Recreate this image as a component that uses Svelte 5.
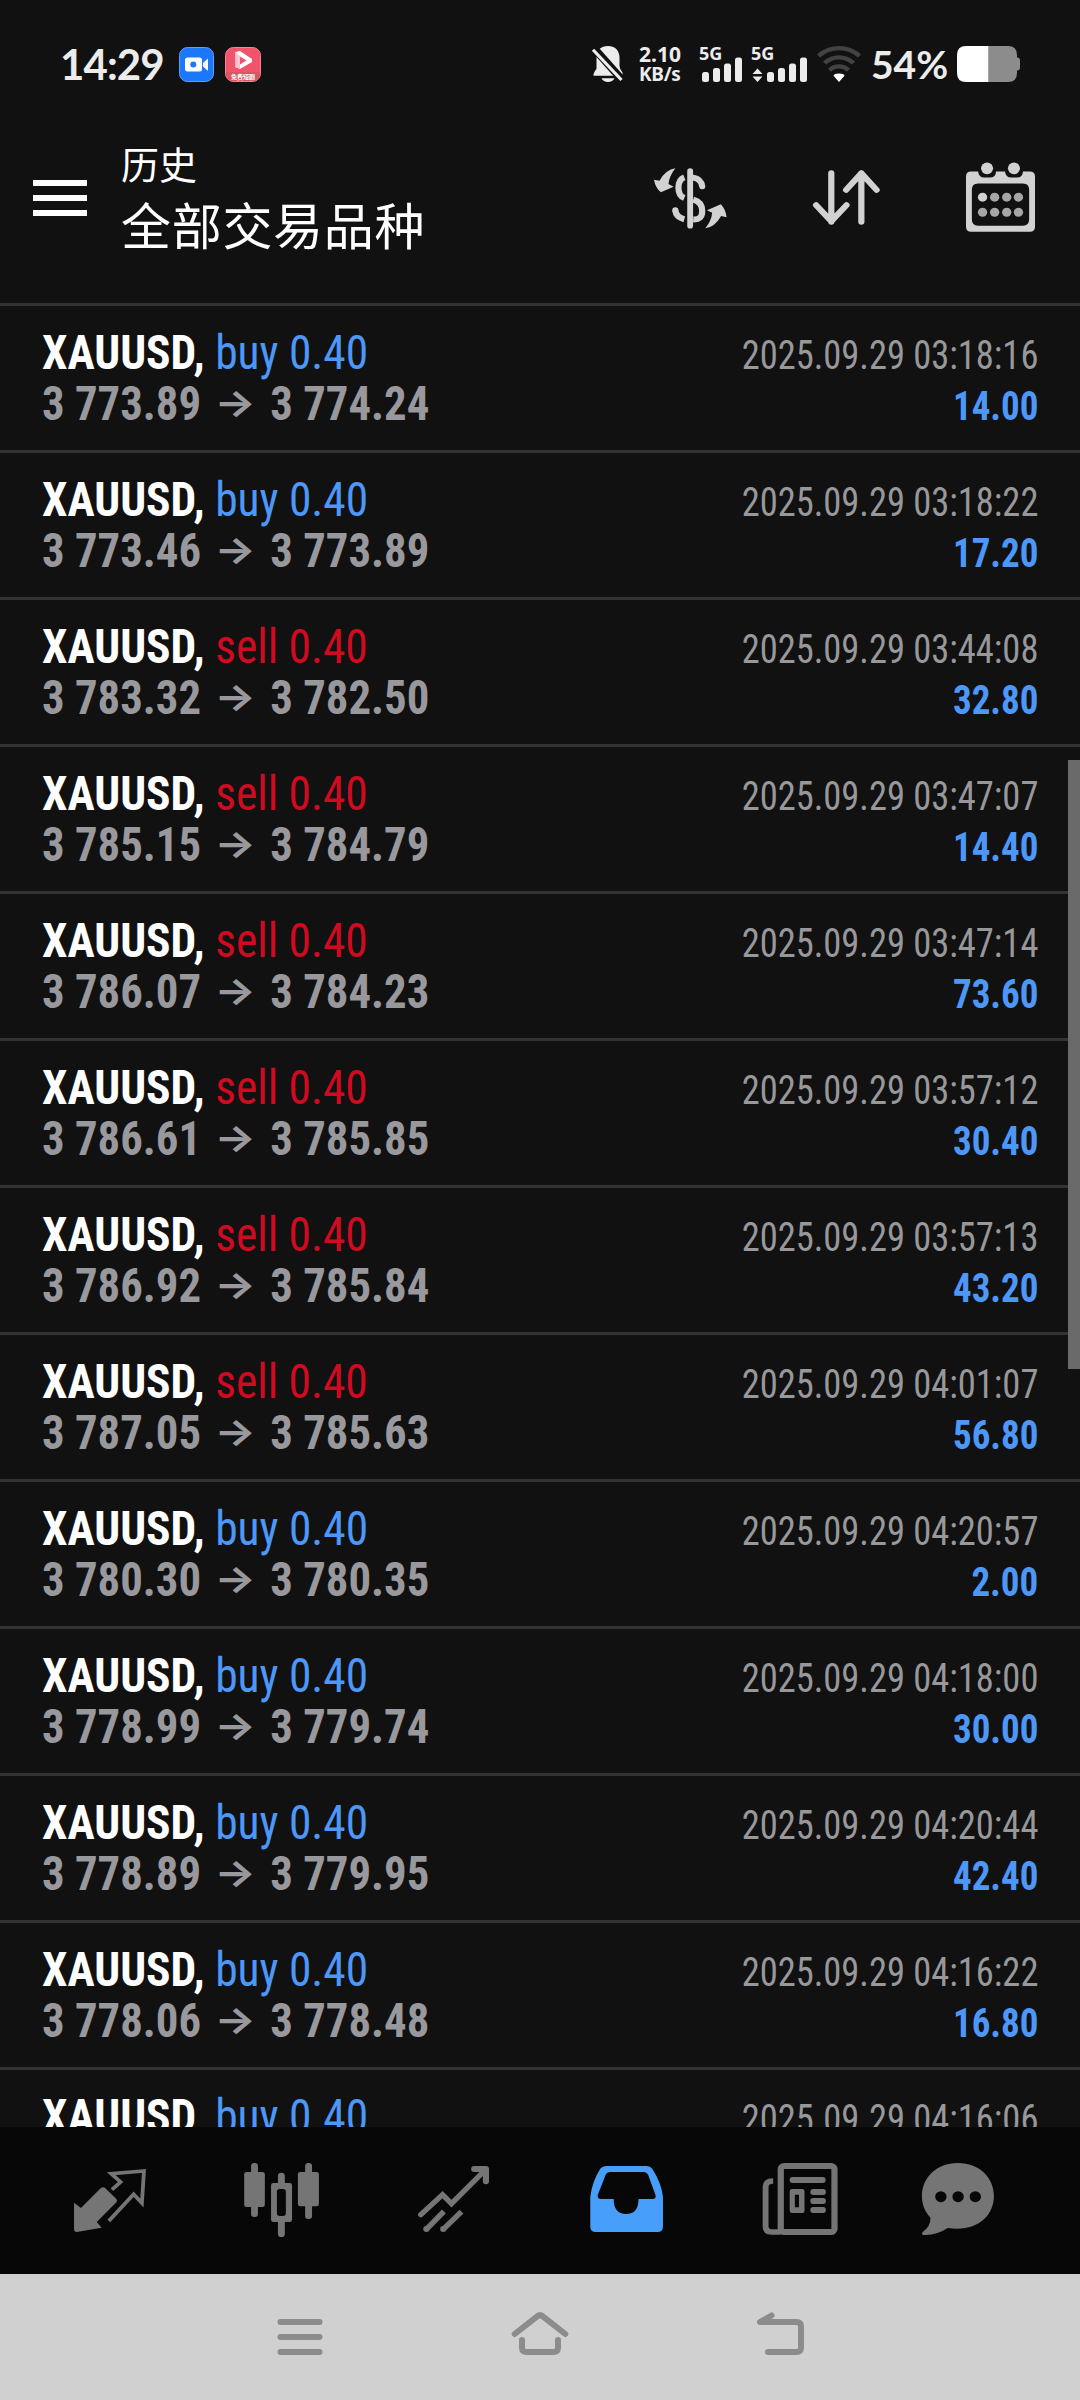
<script lang="ts">
  type Deal = {
    side: "buy" | "sell";
    open: string;
    close: string;
    time: string;
    profit: string;
  };

  const deals: Deal[] = [
    { side: "buy", open: "3 773.89", close: "3 774.24", time: "03:18:16", profit: "14.00" },
    { side: "buy", open: "3 773.46", close: "3 773.89", time: "03:18:22", profit: "17.20" },
    { side: "sell", open: "3 783.32", close: "3 782.50", time: "03:44:08", profit: "32.80" },
    { side: "sell", open: "3 785.15", close: "3 784.79", time: "03:47:07", profit: "14.40" },
    { side: "sell", open: "3 786.07", close: "3 784.23", time: "03:47:14", profit: "73.60" },
    { side: "sell", open: "3 786.61", close: "3 785.85", time: "03:57:12", profit: "30.40" },
    { side: "sell", open: "3 786.92", close: "3 785.84", time: "03:57:13", profit: "43.20" },
    { side: "sell", open: "3 787.05", close: "3 785.63", time: "04:01:07", profit: "56.80" },
    { side: "buy", open: "3 780.30", close: "3 780.35", time: "04:20:57", profit: "2.00" },
    { side: "buy", open: "3 778.99", close: "3 779.74", time: "04:18:00", profit: "30.00" },
    { side: "buy", open: "3 778.89", close: "3 779.95", time: "04:20:44", profit: "42.40" },
    { side: "buy", open: "3 778.06", close: "3 778.48", time: "04:16:22", profit: "16.80" },
    { side: "buy", open: "", close: "", time: "04:16:06", profit: "" },
  ];
</script>

<div class="screen">
  <div class="status">
    <span class="clock">14:29</span>
    <svg width="35" height="35" viewBox="0 0 35 35">
      <rect x=".5" y=".5" width="34" height="34" rx="8" fill="#1b78fb" stroke="#5c9ffc" />
      <rect x="6" y="10.500" width="17" height="14" rx="2.500" fill="#fff" />
      <path d="M24 16L29 11.500v12.500l-5-4.500z" fill="#fff" />
      <circle cx="14.300" cy="17.500" r="3" fill="#1b78fb" />
    </svg>
    <svg class="app-two" width="36" height="35" viewBox="0 0 36 35">
      <rect x=".5" y=".5" width="35" height="34" rx="8" fill="#f0536b" stroke="#f58595" />
      <path d="M1 25h34v2q0 7-7 7H8q-7 0-7-7z" fill="#d9565f" />
      <path d="M10.500 5L15 4l12 8v3L15 22l-4.500-2z" fill="#fff" />
      <path d="M10.500 5L15 9.500V22l-4.500-2z" fill="#fbc3cb" />
      <path d="M15 9.500l6.500 4-6.500 4z" fill="#f0536b" />
      <text x="18" y="32" text-anchor="middle" class="badge-text">免费短剧</text>
    </svg>

    <div class="signals">
      <svg width="31" height="36" viewBox="0 0 31 38" preserveAspectRatio="none">
        <path d="M6 4.500Q10 0 16 0c8 0 11.500 6 11.500 12v9q0 3 3 7v3.500H1.500Q1 29 4.500 24V12Q4.500 7 6 4.500z" fill="#ececec" />
        <path d="M9.500 34h13q-2 4-6.500 4t-6.500-4z" fill="#ececec" />
        <path d="M0 0l32 38" stroke="#111" stroke-width="8" />
        <path d="M1 4l28.500 32" stroke="#ececec" stroke-width="3.200" />
      </svg>
      <div class="speed"><span>2.10</span><span class="unit">KB/s</span></div>
      <svg class="cell" width="43" height="36" viewBox="0 0 43 36">
        <text x="-1" y="14" class="net">5G</text>
        <g fill="#ececec">
          <rect x="2" y="26" width="7" height="10" rx="2.500" />
          <rect x="13" y="22" width="7" height="14" rx="2.500" />
          <rect x="24" y="17.500" width="7" height="18.500" rx="2.500" />
          <rect x="35" y="11.500" width="7" height="24.500" rx="2.500" />
        </g>
      </svg>
      <svg class="cell-two" width="55" height="36" viewBox="0 0 55 36">
        <text x="-1" y="14" class="net">5G</text>
        <path d="M.5 28L5.500 22.500l5 5.500zM.5 30.500L5.500 36l5-5.500z" fill="#ececec" />
        <g fill="#ececec">
          <rect x="15" y="26" width="7" height="10" rx="2.500" />
          <rect x="26" y="22" width="7" height="14" rx="2.500" />
          <rect x="37" y="17.500" width="7" height="18.500" rx="2.500" />
          <rect x="48" y="11.500" width="7" height="24.500" rx="2.500" />
        </g>
      </svg>
      <svg class="wifi" width="44" height="36" viewBox="0 0 44 38" preserveAspectRatio="none">
        <g fill="none" stroke="#424242" stroke-width="4.500">
          <path d="M1.500 10.500Q10.500 2.300 22 2.300t20.500 8.200" />
          <path d="M7.500 18Q14 12 22 12t14.500 6" />
          <path d="M12.500 25.500Q16.500 21.500 22 21.500t9.500 4" />
        </g>
        <path d="M22 38l-5.500-6.500Q17 29 22 29t5.500 2.500z" fill="#fff" />
      </svg>
      <span class="percent">54%</span>
      <svg width="63" height="36" viewBox="0 0 63 36">
        <path d="M31.500 0H51q9 0 9 9v2.500q3 0 3 3v7q0 3-3 3V27q0 9-9 9H31.500z" fill="#8c8c8c" />
        <path d="M31.500 0H9Q0 0 0 9v18q0 9 9 9h22.500z" fill="#fff" />
      </svg>
    </div>
  </div>

  <header>
    <div class="burger"><i></i><i></i><i></i></div>
    <div class="titles">
      <div class="sub">历史</div>
      <div class="main">全部交易品种</div>
    </div>
    <svg class="dollar" width="73" height="61" viewBox="330 443 212 183" preserveAspectRatio="none">
      <path d="M392 444Q364 448 346 481L330 478Q334 502 350 516L387 499L372 491Q374 468 392 444z" fill="#d2d2d2" />
      <path d="M479 624Q507 620 525 587L541 591Q538 567 524 552L484 570L499 577Q497 600 479 624z" fill="#d2d2d2" />
      <g fill="none" stroke="#d2d2d2" stroke-width="18">
        <path d="M418 471Q401 478 401 502T418 533" />
        <path d="M444 472Q467 476 470 498" stroke-linecap="round" />
        <path d="M444 538Q470 545 470 572T444 597" />
        <path d="M392 571Q394 590 418 597" />
      </g>
      <circle cx="392" cy="570" r="9" fill="#d2d2d2" />
      <path d="M435 452v164" stroke="#d2d2d2" stroke-width="17" stroke-linecap="round" />
    </svg>
    <svg class="sort" width="67" height="55" viewBox="792 451 194 166" preserveAspectRatio="none">
      <g fill="none" stroke="#d2d2d2" stroke-width="18" stroke-linecap="round" stroke-linejoin="round">
        <path d="M845 461v146M801 557l44 49 44-49" />
        <path d="M932 607V461M888 511l44-50 44 50" />
      </g>
    </svg>
    <svg class="cal" width="69" height="70" viewBox="1237 425 200 209" preserveAspectRatio="none">
      <path fill-rule="evenodd" fill="#d2d2d2" d="M1252 453H1272Q1274 471 1290 471H1306Q1324 471 1324 453H1350Q1352 471 1368 471H1384Q1402 471 1402 453H1422Q1437 453 1437 468V618Q1437 633 1422 633H1252Q1237 633 1237 618V468Q1237 453 1252 453zM1272 489Q1254 489 1254 507V597Q1254 615 1272 615H1402Q1420 615 1420 597V507Q1420 489 1402 489z" />
      <circle cx="1298" cy="444" r="17.500" fill="#d2d2d2" />
      <circle cx="1376" cy="444" r="17.500" fill="#d2d2d2" />
      {#each [530, 575] as cy}
        {#each [1285, 1320, 1355, 1389] as cx}
          <circle {cx} {cy} r="13.500" fill={cx === 1285 && cy === 530 ? "#d2d2d2" : "#a6a6a6"} />
        {/each}
      {/each}
    </svg>
  </header>

  <div class="list">
    {#each deals as deal (deal.time)}
      <div class="deal">
        <div class="line">
          <div class="title"><b>XAUUSD,</b> <span class={deal.side}>{deal.side} 0.40</span></div>
          <div class="time">2025.09.29 {deal.time}</div>
        </div>
        {#if deal.profit}
          <div class="line">
            <div class="prices">{deal.open}<span class="arrow">→</span>{deal.close}</div>
            <div class="profit">{deal.profit}</div>
          </div>
        {/if}
      </div>
    {/each}
    <div class="thumb"></div>
  </div>

  <nav class="tabs">
    <svg viewBox="69.7 261 499.4 441" preserveAspectRatio="none">
      <path d="M293 444q6-5 12 0l33 33q4 5 0 10l-57 59 14 17-72 13q-8 0-8-8v-80l20 16z" fill="#757575" />
      <path d="M325 449l25-23-27-25 95-8-6 96-24-26-72 80" fill="none" stroke="#757575" stroke-width="11" />
    </svg>
    <svg viewBox="569.1 261 499.4 441" preserveAspectRatio="none">
      <g fill="#757575">
        <rect x="709" y="396" width="60" height="105" rx="7" />
        <rect x="729" y="369" width="20" height="162" rx="9" />
        <rect x="865" y="396" width="61" height="103" rx="7" />
        <rect x="886" y="369" width="20" height="168" rx="9" />
        <path d="M807 429v-21q0-10 10-10t10 10v21h14q7 0 7 7v103q0 7-7 7h-14v35q0 10-10 10t-10-10v-35h-13q-7 0-7-7V436q0-7 7-7zM812 447q-8 0-8 8v65q0 8 8 8h10q8 0 8-8v-65q0-8-8-8z" fill-rule="evenodd" />
      </g>
    </svg>
    <svg viewBox="1068.6 261 499.4 441" preserveAspectRatio="none">
      <g fill="none" stroke="#757575" stroke-width="16">
        <path d="M1222 524l63-60 26 27 95-98" stroke-linecap="round" />
        <path d="M1377 387h34v37" stroke-width="18" stroke-linecap="round" stroke-linejoin="round" />
        <path d="M1238 568l51-54M1287 568l53-53" />
      </g>
      <circle cx="1238" cy="567" r="9" fill="#757575" />
      <circle cx="1287" cy="567" r="9" fill="#757575" />
    </svg>
    <svg viewBox="0 261 499.4 441" preserveAspectRatio="none">
      <path fill="#489efb" fill-rule="evenodd" d="M192 378H310Q320 378 326 386Q353 430 357 470V560Q357 576 341 576H162Q146 576 146 560V470Q151 425 175 386Q181 378 192 378zM205 396Q194 396 190 406L168 464Q165 477 178 477H214Q214 522 250 522T286 477H325Q339 477 335 464L315 407Q311 396 300 396z" />
    </svg>
    <svg viewBox="499.4 261 499.4 441" preserveAspectRatio="none">
      <g fill="none" stroke="#757575" stroke-width="18">
        <rect x="699" y="378" width="156" height="198" rx="10" />
        <path d="M677 423q-22 0-22 18v118q0 17 17 17h27" stroke-width="17" />
      </g>
      <path fill="#757575" fill-rule="evenodd" d="M732 447h29q7 0 7 7v58q0 7-7 7h-29q-7 0-7-7v-58q0-7 7-7zM740 464v38h12v-38z" />
      <g fill="#757575">
        <rect x="725" y="411" width="104" height="18" rx="8" />
        <rect x="785" y="447" width="45" height="18" rx="8" />
        <rect x="785" y="474" width="45" height="18" rx="8" />
        <rect x="785" y="501" width="45" height="18" rx="8" />
      </g>
    </svg>
    <svg viewBox="998.9 261 499.4 441" preserveAspectRatio="none">
      <path d="M1213 369C1276 369 1318 413 1318 468C1318 530 1266 577 1184 564Q1150 587 1114 585Q1106 583 1112 575Q1134 559 1134 533C1116 513 1109 491 1109 468C1109 413 1152 369 1213 369z" fill="#757575" />
      <g fill="#070707">
        <circle cx="1164" cy="470" r="16.500" />
        <circle cx="1214" cy="470" r="16.500" />
        <circle cx="1264" cy="470" r="16.500" />
      </g>
    </svg>
  </nav>

  <div class="sysnav">
    <svg viewBox="0 0 240 126"><path d="M100.500 48h39M100.500 63h39M100.500 78h39" /></svg>
    <svg viewBox="0 0 240 126">
      <path d="M94.700 60L117.500 42.200q2.500-2 5 0L145.300 60" />
      <path d="M102 66v7.500q0 4.500 4.500 4.500h27q4.500 0 4.500-4.500V66" />
    </svg>
    <svg viewBox="0 0 240 126"><path d="M111.500 41.500l-11.500 6.500h36.500q4.500 0 4.500 4.500v21q0 4.500-4.500 4.500H108" /></svg>
  </div>
</div>

<style>
  :global(body) { background: #111; }

  .screen {
    width: 1080px; height: 2400px; overflow: hidden;
    display: flex; flex-direction: column;
    background: #111; color: #fff;
    font-family: "Roboto Condensed", Roboto, "Noto Sans CJK SC", sans-serif;
  }
  svg { display: block; flex: none; overflow: visible; }

  .status { display: flex; align-items: center; height: 128px; padding: 0 60px; box-sizing: border-box; }
  .clock { width: 119px; font: 700 42px/50px Lato, sans-serif; letter-spacing: -0.900px; color: #ececec; }
  .app-two { margin-left: 11px; }
  .badge-text { font: 700 6px "Noto Sans CJK SC", sans-serif; fill: #fff; }
  .signals { display: flex; align-items: center; margin-left: auto; }
  .speed { display: flex; flex-direction: column; width: 44px; margin-left: 16px; font: 700 21px/20px "Noto Sans", sans-serif; color: #ececec; }
  .unit { font-size: 19px; letter-spacing: -0.3px; }
  .net { font: 700 18px "Noto Sans", sans-serif; fill: #ececec; }
  .cell { margin-left: 17px; }
  .cell-two { margin-left: 9px; }
  .wifi { margin-left: 10px; }
  .percent { width: 86px; margin-left: 10px; font: 700 39px/44px Lato, sans-serif; color: #ececec; }

  header { display: flex; align-items: flex-start; height: 175px; padding-left: 33px; box-sizing: border-box; }
  .burger { display: flex; flex-direction: column; gap: 9px; margin-top: 52px; }
  .burger i { width: 54px; height: 6px; background: #fff; }
  .titles { width: 500px; margin-left: 34px; font-family: "Noto Sans CJK SC", sans-serif; }
  .sub { margin-top: 5px; font-size: 38px; line-height: 60px; }
  .main { font-size: 50px; line-height: 60px; letter-spacing: 0.700px; }
  .dollar { margin-left: 33px; margin-top: 40px; }
  .sort { margin-left: 86px; margin-top: 42px; }
  .cal { margin-left: 86px; margin-top: 34px; }

  .list { position: relative; flex: 1; overflow: hidden; }
  .deal { height: 147px; padding: 24px 42px 0; box-sizing: border-box; border-top: 3px solid #333; }
  .line { display: flex; justify-content: space-between; align-items: baseline; height: 51px; white-space: pre; }
  .title, .prices { font-size: 48px; line-height: 44px; transform-origin: left; }
  .time, .profit { font-size: 40px; line-height: 51px; transform-origin: right; }
  .title { transform: scaleX(0.947); }
  .prices { transform: scaleX(0.933); font-weight: 700; color: #98989d; }
  .time { transform: scaleX(0.912); color: #98989b; }
  .profit { transform: scaleX(0.925); font-weight: 700; }
  .buy, .profit { color: #4c97f8; }
  .sell { color: #d00a20; }
  .arrow { display: inline-block; width: 74px; text-align: center; font-family: Inter, sans-serif; font-size: 37px; line-height: 40px; transform: translate(-1px, -4px) scaleX(1.27); }
  .thumb { position: absolute; top: 457px; right: 0; width: 12px; height: 609px; background: #6a6a6a; }

  .tabs { display: flex; height: 147px; padding-left: 24px; background: #070707; }
  .tabs svg { width: 172px; height: 147px; overflow: hidden; }

  .sysnav { display: flex; justify-content: center; height: 126px; background: #d0d0d0; }
  .sysnav svg { width: 240px; height: 126px; fill: none; stroke: #8c8c8c; stroke-width: 6; stroke-linecap: round; stroke-linejoin: round; }
</style>
